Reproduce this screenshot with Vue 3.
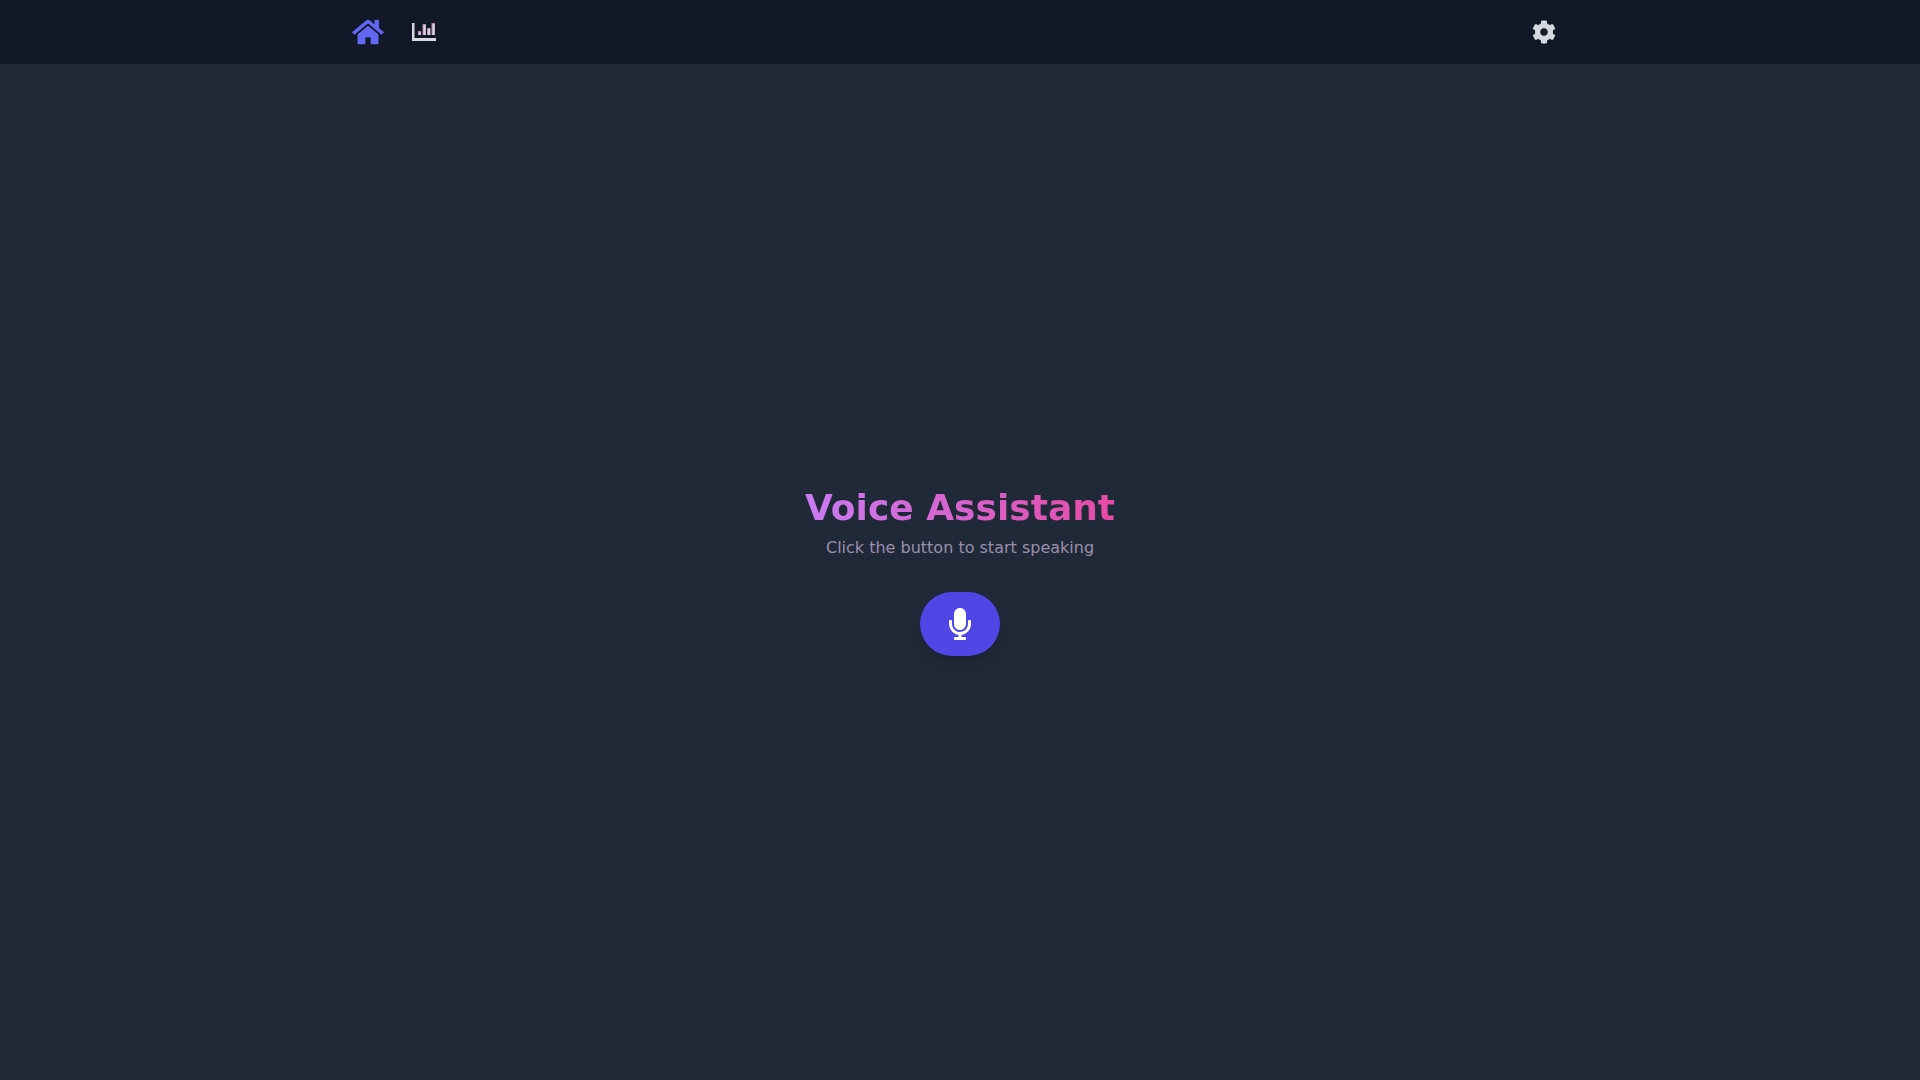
<script setup>
const homePath = 'M280.37 148.26L96 300.11V464a16 16 0 0 0 16 16l112.06-.29a16 16 0 0 0 15.92-16V368a16 16 0 0 1 16-16h64a16 16 0 0 1 16 16v95.64a16 16 0 0 0 16 16.05L464 480a16 16 0 0 0 16-16V300L295.67 148.26a12.19 12.19 0 0 0-15.3 0zM571.6 251.47L488 182.56V44.05a12 12 0 0 0-12-12h-56a12 12 0 0 0-12 12v72.61L318.47 43a48 48 0 0 0-61 0L4.34 251.47a12 12 0 0 0-1.6 16.9l25.5 31A12 12 0 0 0 45.15 301l235.22-193.74a12.19 12.19 0 0 1 15.3 0L530.9 301a12 12 0 0 0 16.9-1.6l25.5-31a12 12 0 0 0-1.7-16.93z'
const cogPath = 'M487.4 315.7l-42.6-24.6c4.3-23.2 4.3-47 0-70.2l42.6-24.6c4.9-2.8 7.1-8.6 5.5-14-11.1-35.6-30-67.8-54.7-94.6-3.8-4.1-10-5.1-14.8-2.3L380.8 110c-17.9-15.4-38.5-27.3-60.8-35.1V25.8c0-5.6-3.9-10.5-9.4-11.7-36.7-8.2-74.3-7.8-109.2 0-5.5 1.2-9.4 6.1-9.4 11.7V75c-22.2 7.9-42.8 19.8-60.8 35.1L88.7 85.5c-4.9-2.8-11-1.9-14.8 2.3-24.7 26.7-43.6 58.9-54.7 94.6-1.7 5.4.6 11.2 5.5 14L67.3 221c-4.3 23.2-4.3 47 0 70.2l-42.6 24.6c-4.9 2.8-7.1 8.6-5.5 14 11.1 35.6 30 67.8 54.7 94.6 3.8 4.1 10 5.1 14.8 2.3l42.6-24.6c17.9 15.4 38.5 27.3 60.8 35.1v49.2c0 5.6 3.9 10.5 9.4 11.7 36.7 8.2 74.3 7.8 109.2 0 5.5-1.2 9.4-6.1 9.4-11.7v-49.2c22.2-7.9 42.8-19.8 60.8-35.1l42.6 24.6c4.9 2.8 11 1.9 14.8-2.3 24.7-26.7 43.6-58.9 54.7-94.6 1.5-5.5-.7-11.3-5.6-14.1zM256 336c-44.1 0-80-35.9-80-80s35.9-80 80-80 80 35.9 80 80-35.9 80-80 80z'
const micPath = 'M176 352c53.02 0 96-42.98 96-96V96c0-53.02-42.98-96-96-96S80 42.98 80 96v160c0 53.02 42.98 96 96 96zm160-160h-16c-8.84 0-16 7.16-16 16v48c0 74.8-64.49 134.82-140.79 127.38C96.71 376.89 48 317.11 48 250.3V208c0-8.84-7.16-16-16-16H16c-8.84 0-16 7.16-16 16v40.16c0 89.64 63.97 169.55 152 181.69V464H96c-8.84 0-16 7.16-16 16v16c0 8.84 7.16 16 16 16h160c8.84 0 16-7.16 16-16v-16c0-8.84-7.16-16-16-16h-56v-33.77C285.71 418.47 352 344.9 352 256v-48c0-8.84-7.16-16-16-16z'
const bars = [
  { x: 6, y: 8, w: 3, h: 4 },
  { x: 10.5, y: 1, w: 3.5, h: 11 },
  { x: 15, y: 5, w: 3.5, h: 7 },
  { x: 19.5, y: 0, w: 3.5, h: 12 },
]
</script>

<template>
  <div class="page">
    <nav class="nav">
      <div class="nav-inner">
        <div class="nav-left">
          <svg class="home" viewBox="0 0 576 512"><path :d="homePath" fill="currentColor" /></svg>
          <svg class="chart" viewBox="0 0 24 18">
            <path d="M0 0h2.5v15H24v3H0z" fill="currentColor" />
            <g v-for="b in bars" :key="b.x">
              <rect :x="b.x" :y="b.y" :width="b.w" :height="b.h" fill="#b583ad" />
              <rect :x="b.x + 1" :y="b.y + 1" :width="b.w - 1.5" :height="b.h - 1" fill="currentColor" />
            </g>
          </svg>
        </div>
        <svg class="cog" viewBox="0 0 512 512"><path :d="cogPath" fill="currentColor" /></svg>
      </div>
    </nav>
    <main class="main">
      <h1 class="title">Voice Assistant</h1>
      <p class="subtitle">Click the button to start speaking</p>
      <button class="mic-btn" type="button" aria-label="Start speaking">
        <svg class="mic" viewBox="0 0 352 512"><path :d="micPath" fill="currentColor" /></svg>
      </button>
    </main>
  </div>
</template>

<style scoped>
.page {
  height: 1080px;
  display: flex;
  flex-direction: column;
  background: #1f2937;
  font-family: "DejaVu Sans", sans-serif;
}
.nav {
  height: 64px;
  flex: none;
  background: #111827;
}
.nav-inner {
  width: 1280px;
  height: 100%;
  margin: 0 auto;
  padding: 0 44px 0 32px;
  box-sizing: border-box;
  display: flex;
  align-items: center;
  justify-content: space-between;
}
.nav-left {
  display: flex;
  align-items: center;
  gap: 28px;
}
.home {
  width: 32px;
  height: 28px;
  color: #6366f1;
}
.chart {
  width: 24px;
  height: 18px;
  color: #d8d9e0;
}
.cog {
  width: 24px;
  height: 24px;
  color: #d5d7df;
}
.main {
  flex: 1;
  display: flex;
  flex-direction: column;
  align-items: center;
  justify-content: center;
}
.title {
  margin: 0 0 8px;
  font-size: 36px;
  line-height: 40px;
  font-weight: 700;
  background: linear-gradient(to right, #c87bf3, #e74ba6);
  -webkit-background-clip: text;
  background-clip: text;
  color: transparent;
}
.subtitle {
  margin: 0 0 32px;
  font-size: 16px;
  line-height: 24px;
  color: #9c8fac;
}
.mic-btn {
  width: 80px;
  height: 64px;
  padding: 0;
  border: 0;
  border-radius: 9999px;
  background: #4f46e5;
  color: #fff;
  display: flex;
  align-items: center;
  justify-content: center;
  box-shadow: 0 10px 15px -3px rgba(0, 0, 0, 0.1), 0 4px 6px -4px rgba(0, 0, 0, 0.1);
}
.mic {
  width: 22px;
  height: 32px;
}
</style>
